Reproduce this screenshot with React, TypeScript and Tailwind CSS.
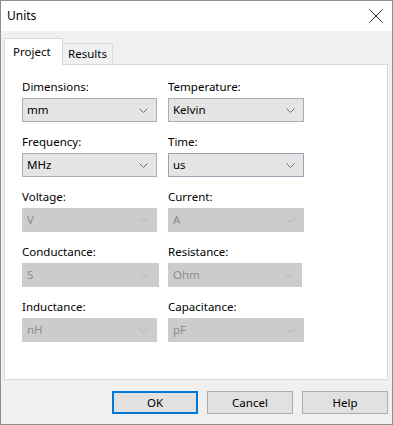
import React from 'react';

type Field = {
  label: string;
  value: string;
  disabled?: boolean;
  wide?: boolean;
  narrow?: boolean;
  hot?: boolean;
};

const fields: Field[] = [
  { label: 'Dimensions:', value: 'mm' },
  { label: 'Temperature:', value: 'Kelvin' },
  { label: 'Frequency:', value: 'MHz' },
  { label: 'Time:', value: 'us', hot: true },
  { label: 'Voltage:', value: 'V', disabled: true },
  { label: 'Current:', value: 'A', disabled: true },
  { label: 'Conductance:', value: 'S', disabled: true, wide: true },
  { label: 'Resistance:', value: 'Ohm', disabled: true, narrow: true },
  { label: 'Inductance:', value: 'nH', disabled: true },
  { label: 'Capacitance:', value: 'pF', disabled: true },
];

const Chevron = ({ color }: { color: string }) => (
  <svg width="9" height="5" viewBox="0 0 9 5" fill="none">
    <path d="M0.5 0.5 L4.5 4.5 L8.5 0.5" stroke={color} strokeWidth="1" />
  </svg>
);

const Combo: React.FC<{ f: Field }> = ({ f }) => {
  const box = f.disabled
    ? 'bg-[#cccccc] border-[#cccccc] text-[#8d8d8d]'
    : f.hot
      ? 'bg-[#e5e5e5] border-[#9aa6b4] text-black'
      : 'bg-[#e5e5e5] border-[#adadad] text-black';
  const width = f.wide ? 'w-[137px]' : f.narrow ? 'w-[134px]' : 'w-full';
  return (
    <div className={`h-[24px] ${width} border flex items-center justify-between pl-[4px] pr-[8px] ${box}`}>
      <span>{f.value}</span>
      <Chevron color={f.disabled ? '#b4b4b4' : '#707070'} />
    </div>
  );
};

export default function App() {
  return (
    <div className="w-[393px] h-[425px] border border-[#8f8f8f] bg-[#f0f0f0] flex flex-col text-[11.5px] leading-[16px] text-black font-['Segoe_UI','Noto_Sans',sans-serif]">
      <div className="h-[30px] bg-white flex items-center justify-between pl-[6px] pr-[9px] shrink-0">
        <span className="text-[12px]">Units</span>
        <svg width="14" height="14" viewBox="0 0 14 14" fill="none">
          <path d="M0.5 0.5 L13.5 13.5 M13.5 0.5 L0.5 13.5" stroke="#222" strokeWidth="1" />
        </svg>
      </div>

      <div className="flex flex-col pl-[3px] pr-[4px] pt-[7px]">
        <div className="flex items-end h-[26px]">
          <div className="h-[27px] w-[59px] bg-white border border-b-0 border-[#d9d9d9] flex items-center pl-[8px] -mb-px relative z-10">
            Project
          </div>
          <div className="h-[21px] w-[50px] bg-[#f0f0f0] border border-l-0 border-b-0 border-[#d9d9d9] flex items-center justify-center">
            Results
          </div>
        </div>

        <div className="h-[316px] bg-white border border-[#d9d9d9] pl-[17px] pt-[14px]">
          <div className="grid grid-cols-[135px_136px] gap-x-[11px] gap-y-[12px]">
            {fields.map((f) => (
              <div key={f.label} className="flex flex-col gap-[3px]">
                <span className="h-[16px] whitespace-nowrap">{f.label}</span>
                <Combo f={f} />
              </div>
            ))}
          </div>
        </div>

        <div className="flex justify-end gap-[9px] mt-[11px]">
          <button className="w-[86px] h-[23px] bg-[#e1e1e1] border-2 border-[#0078d7] flex items-center justify-center">
            OK
          </button>
          <button className="w-[86px] h-[23px] bg-[#e1e1e1] border border-[#adadad] flex items-center justify-center">
            Cancel
          </button>
          <button className="w-[86px] h-[23px] bg-[#e1e1e1] border border-[#adadad] flex items-center justify-center">
            Help
          </button>
        </div>
      </div>
    </div>
  );
}
